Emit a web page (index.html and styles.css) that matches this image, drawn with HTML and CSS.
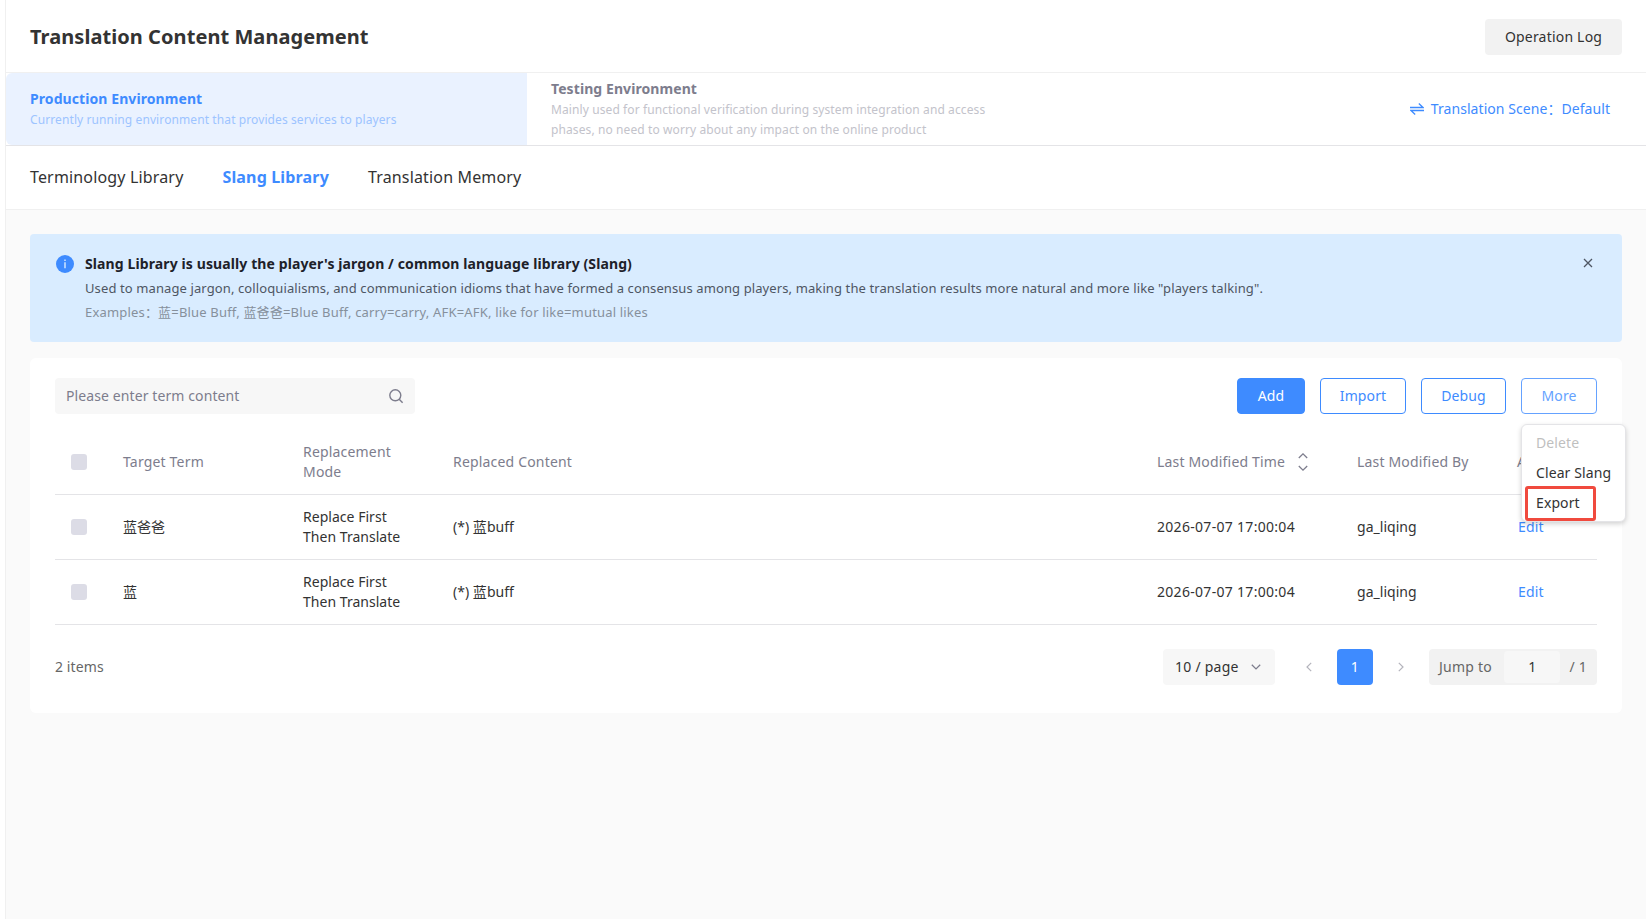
FILE: index.html
```html
<!DOCTYPE html>
<html lang="en">
<head>
  <meta charset="UTF-8">
  <meta name="viewport" content="width=device-width, initial-scale=1">
  <title>Translation Content Management</title>
  <link rel="stylesheet" href="styles.css">
</head>
<body>
  <div class="page">
    <header class="header">
      <h1>Translation Content Management</h1>
      <button type="button" class="log-btn">Operation Log</button>
    </header>

    <div class="env-bar">
      <div class="env active">
        <div class="env-name">Production Environment</div>
        <div class="env-desc">Currently running environment that provides services to players</div>
      </div>
      <div class="env">
        <div class="env-name">Testing Environment</div>
        <div class="env-desc">Mainly used for functional verification during system integration and access<br>phases, no need to worry about any impact on the online product</div>
      </div>
      <a class="scene">
        <svg width="14" height="12" viewBox="0 0 14 12" fill="none" stroke="currentColor" stroke-width="1.3"><path d="M0 4.5h13L8.8.6M14 7.5H1l4.2 3.9"/></svg>
        <span>Translation Scene：Default</span>
      </a>
    </div>

    <nav class="tabs">
      <a class="tab">Terminology Library</a>
      <a class="tab active">Slang Library</a>
      <a class="tab">Translation Memory</a>
    </nav>

    <main class="content">
      <div class="notice">
        <svg class="notice-icon" width="18" height="18" viewBox="0 0 18 18"><circle cx="9" cy="9" r="9" fill="#3e8bff"/><path d="M8.3 4.6h1.4v1.5H8.3zM8.3 7.3h1.4v6H8.3z" fill="#d9ecff"/></svg>
        <div class="notice-body">
          <div class="notice-title">Slang Library is usually the player's jargon / common language library (Slang)</div>
          <div class="notice-desc">Used to manage jargon, colloquialisms, and communication idioms that have formed a consensus among players, making the translation results more natural and more like "players talking".</div>
          <div class="notice-example">Examples：蓝=Blue Buff, 蓝爸爸=Blue Buff, carry=carry, AFK=AFK, like for like=mutual likes</div>
        </div>
        <svg class="notice-close" width="10" height="10" viewBox="0 0 10 10" fill="none" stroke="#4e5663" stroke-width="1.3"><path d="M1 1l8 8M9 1L1 9"/></svg>
      </div>

      <section class="card">
        <div class="toolbar">
          <div class="search">
            <span>Please enter term content</span>
            <svg width="16" height="16" viewBox="0 0 16 16" fill="none" stroke="#7d7d8d" stroke-width="1.4"><circle cx="7.3" cy="7.3" r="5.5"/><path d="M11.2 11.2l3.4 3.6"/></svg>
          </div>
          <div class="actions">
            <button type="button" class="btn primary add">Add</button>
            <button type="button" class="btn import">Import</button>
            <button type="button" class="btn debug">Debug</button>
            <div class="more">
              <button type="button" class="btn light">More</button>
              <ul class="menu">
                <li class="disabled">Delete</li>
                <li>Clear Slang</li>
                <li>Export</li>
              </ul>
              <div class="highlight"></div>
            </div>
          </div>
        </div>

        <table class="table">
          <colgroup>
            <col class="c-check"><col class="c-term"><col class="c-mode"><col><col class="c-time"><col class="c-by"><col class="c-action">
          </colgroup>
          <thead>
            <tr>
              <th><span class="checkbox"></span></th>
              <th>Target Term</th>
              <th>Replacement<br>Mode</th>
              <th>Replaced Content</th>
              <th>
                <div class="sortable">
                  <span>Last Modified Time</span>
                  <svg width="10" height="18" viewBox="0 0 10 18" fill="none" stroke="#7d7d8d" stroke-width="1.3"><path d="M.8 5L5 .9 9.2 5M.8 13L5 17.1 9.2 13"/></svg>
                </div>
              </th>
              <th>Last Modified By</th>
              <th>Action</th>
            </tr>
          </thead>
          <tbody>
            <tr>
              <td><span class="checkbox"></span></td>
              <td>蓝爸爸</td>
              <td>Replace First<br>Then Translate</td>
              <td>(*) 蓝buff</td>
              <td class="time">2026-07-07 17:00:04</td>
              <td>ga_liqing</td>
              <td><a class="link">Edit</a></td>
            </tr>
            <tr>
              <td><span class="checkbox"></span></td>
              <td>蓝</td>
              <td>Replace First<br>Then Translate</td>
              <td>(*) 蓝buff</td>
              <td class="time">2026-07-07 17:00:04</td>
              <td>ga_liqing</td>
              <td><a class="link">Edit</a></td>
            </tr>
          </tbody>
        </table>

        <div class="footer">
          <span class="total">2 items</span>
          <div class="pager">
            <div class="page-size">
              <span>10 / page</span>
              <svg width="10" height="6" viewBox="0 0 10 6" fill="none" stroke="#7d7d8d" stroke-width="1.3"><path d="M.8.8L5 4.9 9.2.8"/></svg>
            </div>
            <svg class="prev" width="6" height="10" viewBox="0 0 6 10" fill="none" stroke="#b4b4bc" stroke-width="1.2"><path d="M5.2.8L1 5l4.2 4.2"/></svg>
            <span class="current">1</span>
            <svg class="next" width="6" height="10" viewBox="0 0 6 10" fill="none" stroke="#b4b4bc" stroke-width="1.2"><path d="M.8.8L5 5 .8 9.2"/></svg>
            <div class="jump">
              <span>Jump to</span>
              <span class="jump-input">1</span>
              <span>/ 1</span>
            </div>
          </div>
        </div>
      </section>
    </main>
  </div>
</body>
</html>
```
FILE: styles.css
```css
* { box-sizing: border-box; }
body { margin: 0; font-family: "Noto Sans", "Noto Sans CJK SC", sans-serif; font-size: 14px; line-height: 20px; letter-spacing: 0.1px; color: #333; background: #fff; }
h1, ul { margin: 0; padding: 0; }
button { font: inherit; letter-spacing: inherit; }
svg { display: block; flex: none; }

.page { min-height: 919px; margin-left: 5px; border-left: 1px solid #f0f0f0; display: flex; flex-direction: column; }

.header { height: 73px; padding: 2px 24px 0; display: flex; align-items: center; justify-content: space-between; border-bottom: 1px solid #f0f0f0; }
.header h1 { font-size: 20px; line-height: 30px; font-weight: 700; letter-spacing: 0.06px; }
.log-btn { width: 137px; height: 36px; padding: 0; border: none; border-radius: 4px; background: #f2f2f2; color: #333; letter-spacing: 0.2px; }

.env-bar { height: 73px; display: flex; border-bottom: 1px solid #e4e4e7; }
.env { width: 521px; padding: 0 24px 1px; display: flex; flex-direction: column; justify-content: center; white-space: nowrap; color: #7d7d8d; }
.env.active { background: #eaf2ff; border-radius: 6px 0 0 6px; color: #3e8bff; }
.env-name { margin-bottom: 1px; font-weight: 700; line-height: 21px; letter-spacing: 0.08px; }
.env-desc { font-size: 12px; color: #c3c3cb; }
.env.active .env-desc { color: #9dc4ff; }
.scene { margin-left: auto; padding-right: 36px; display: flex; align-items: center; gap: 7px; color: #3e8bff; letter-spacing: 0.06px; }

.tabs { height: 64px; padding: 0 24px 2px; display: flex; align-items: center; gap: 39px; border-bottom: 1px solid #f0f0f0; font-size: 16px; letter-spacing: 0.16px; }
.tab.active { color: #3e8bff; font-weight: 700; }

.content { flex: 1; padding: 24px; background: #fafafa; }

.notice { height: 108px; padding: 18px 29px 0 26px; display: flex; align-items: flex-start; background: #d9ecff; border-radius: 4px; }
.notice-icon { margin: 3px 11px 0 0; }
.notice-body { flex: 1; white-space: nowrap; line-height: 24px; font-size: 13px; }
.notice-title { font-size: 14px; font-weight: 700; letter-spacing: 0.11px; color: #1d2129; }
.notice-desc { color: #4e5663; letter-spacing: 0.107px; }
.notice-example { color: #86909c; letter-spacing: 0.18px; }
.notice-close { margin-top: 6px; }

.card { margin-top: 16px; padding: 20px 25px 28px; background: #fff; border-radius: 6px; }
.toolbar { display: flex; justify-content: space-between; }
.search { width: 360px; height: 36px; padding: 0 11px; display: flex; align-items: center; justify-content: space-between; background: #f7f7f7; border-radius: 4px; color: #7d7d8d; }
.actions { display: flex; gap: 15px; }
.btn { height: 36px; padding: 0; border: 1px solid #3e8bff; border-radius: 4px; background: #fff; color: #3e8bff; }
.btn.primary { background: #3e8bff; color: #fff; }
.btn.light { width: 76px; border-color: #65a2ff; color: #65a2ff; }
.add { width: 68px; }
.import { width: 86px; }
.debug { width: 85px; }

.more { position: relative; }
.menu { position: absolute; top: 46px; left: 0; width: 105px; height: 98px; padding: 3px 0; list-style: none; background: #fff; border: 1px solid #e4e4e7; border-radius: 6px; box-shadow: 0 2px 5px rgba(0,0,0,0.18); }
.menu li { height: 30px; padding-left: 14px; line-height: 30px; white-space: nowrap; }
.menu .disabled { color: #bfbfbf; }
.highlight { position: absolute; top: 108px; left: 4px; width: 71px; height: 35px; border: 3px solid #f04a3e; border-radius: 3px; }

.table { width: 100%; margin-top: 16px; table-layout: fixed; border-collapse: separate; border-spacing: 0; }
.table th, .table td { height: 65px; padding: 0 0 0 16px; border-bottom: 1px solid #e4e4e7; text-align: left; font-weight: 400; }
.table th { color: #7d7d8d; letter-spacing: 0.18px; }
.table td { letter-spacing: 0.03px; }
.table .time { letter-spacing: 0.3px; }
.c-check { width: 52px; }
.c-term { width: 180px; }
.c-mode { width: 150px; }
.c-time { width: 200px; }
.c-by { width: 160px; }
.c-action { width: 96px; }
.checkbox { display: block; width: 16px; height: 16px; border-radius: 3px; background: #dcdce6; }
.sortable { display: flex; align-items: center; gap: 13px; }
.link { padding-left: 1px; color: #3e8bff; letter-spacing: 0.2px; }

.footer { margin-top: 24px; display: flex; align-items: center; justify-content: space-between; }
.total { color: #666; }
.pager { display: flex; align-items: center; letter-spacing: 0.25px; }
.page-size { width: 112px; height: 36px; padding: 0 14px 0 12px; display: flex; align-items: center; justify-content: space-between; background: #f7f7f7; border-radius: 4px; }
.prev { margin: 0 25px 0 31px; }
.next { margin: 0 25px; }
.current { width: 36px; height: 36px; line-height: 36px; text-align: center; background: #3e8bff; color: #fff; border-radius: 4px; }
.jump { width: 168px; height: 36px; padding: 0 10px; display: flex; align-items: center; background: #f2f2f2; border-radius: 4px; color: #666; }
.jump-input { width: 56px; height: 32px; margin: 0 9px 0 auto; line-height: 32px; text-align: center; background: #f7f7f7; border-radius: 4px; color: #333; }
```
